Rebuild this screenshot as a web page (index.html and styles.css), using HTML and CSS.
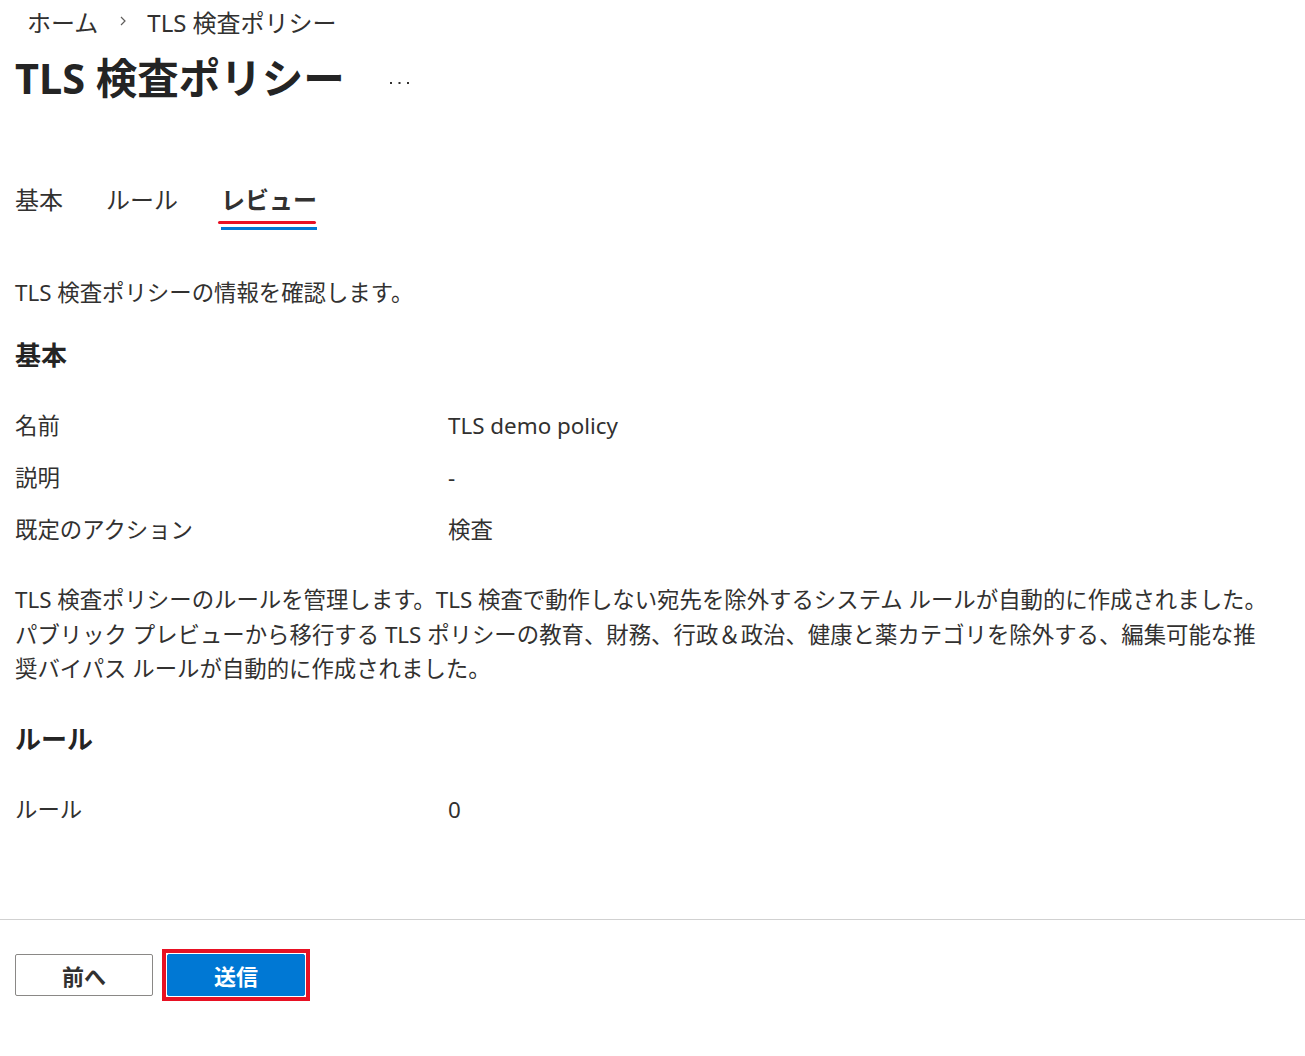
FILE: index.html
```html
<!DOCTYPE html>
<html lang="ja">
<head>
<meta charset="utf-8">
<title>TLS 検査ポリシー</title>
<link rel="stylesheet" href="styles.css">
</head>
<body>
<header class="top">
  <nav class="crumbs">
    <span class="crumb">ホーム</span>
    <svg class="chev" width="8" height="12" viewBox="0 0 8 12"><path d="M2 2 L6 6 L2 10" fill="none" stroke="#605e5c" stroke-width="1.2"/></svg>
    <span class="crumb">TLS 検査ポリシー</span>
  </nav>
  <div class="title-row">
    <h1 class="title">TLS 検査ポリシー</h1>
    <svg class="more" width="20" height="4" viewBox="0 0 20 4" aria-label="その他"><rect x="0" y="1" width="2" height="2" fill="#323130"/><rect x="8.5" y="1" width="2" height="2" fill="#323130"/><rect x="17" y="1" width="2" height="2" fill="#323130"/></svg>
  </div>
</header>

<div class="tabs">
  <div class="tab">基本</div>
  <div class="tab">ルール</div>
  <div class="tab active">レビュー<span class="mark"></span></div>
</div>

<main class="content">
  <p class="desc">TLS 検査ポリシーの情報を確認します。</p>
  <h2 class="section">基本</h2>
  <dl class="grid">
    <dt>名前</dt><dd>TLS demo policy</dd>
    <dt>説明</dt><dd>-</dd>
    <dt>既定のアクション</dt><dd>検査</dd>
  </dl>
  <p class="para">TLS 検査ポリシーのルールを管理します。TLS 検査で動作しない宛先を除外するシステム ルールが自動的に作成されました。パブリック プレビューから移行する TLS ポリシーの教育、財務、行政＆政治、健康と薬カテゴリを除外する、編集可能な推奨バイパス ルールが自動的に作成されました。</p>
  <h2 class="section section-2">ルール</h2>
  <dl class="grid">
    <dt>ルール</dt><dd>0</dd>
  </dl>
</main>

<footer class="footer">
  <button class="btn btn-secondary">前へ</button>
  <button class="btn btn-primary">送信</button>
</footer>
</body>
</html>
```

FILE: styles.css
```css
html, body {
  margin: 0;
  padding: 0;
  background: #ffffff;
}
body {
  font-family: "Noto Sans", "Noto Sans CJK JP", sans-serif;
  color: #323130;
}
.top {
  padding: 4px 0 0 15px;
}
.crumbs {
  display: flex;
  align-items: center;
  height: 34px;
  font-size: 24px;
  color: #323130;
  padding-left: 12px;
}
.chev {
  margin: 0 20px 0 21px;
}
.title-row {
  display: flex;
  align-items: center;
  margin-top: 14px;
}
.title {
  margin: 0;
  font-size: 41.5px;
  line-height: 52px;
  font-weight: 700;
  color: #242424;
}
.more {
  margin-left: 45px;
  margin-top: 10px;
}
.tabs {
  display: flex;
  gap: 43px;
  padding-left: 15px;
  margin-top: 81px;
}
.tab {
  position: relative;
  font-size: 24px;
  line-height: 30px;
  padding-bottom: 12px;
  border-bottom: 3px solid transparent;
  color: #323130;
}
.tab.active {
  font-weight: 700;
  border-bottom-color: #0078d4;
}
.mark {
  position: absolute;
  left: -3px;
  right: 1px;
  bottom: 3px;
  height: 3px;
  border-radius: 2px;
  background: #e81123;
}
.content {
  padding: 0 30px 0 15px;
}
.desc {
  margin: 48px 0 0;
  font-size: 22.4px;
  line-height: 30px;
}
.section {
  margin: 30px 0 0;
  font-size: 26px;
  line-height: 34px;
  font-weight: 700;
  color: #242424;
}
.section-2 {
  margin-top: 35px;
}
.grid {
  display: grid;
  grid-template-columns: 433px 1fr;
  row-gap: 22px;
  margin: 39px 0 0;
  font-size: 22.4px;
  line-height: 30px;
}
.grid dt, .grid dd {
  margin: 0;
}
.para {
  margin: 38px 0 0;
  font-size: 22.4px;
  line-height: 34.5px;
}
.footer {
  margin-top: 94px;
  border-top: 1px solid #d1d1d1;
  padding: 34px 15px 60px;
  display: flex;
  gap: 14px;
}
.btn {
  font-family: "Noto Sans", "Noto Sans CJK JP", sans-serif;
  font-size: 22px;
  font-weight: 700;
  height: 42px;
  width: 138px;
  border-radius: 2px;
  padding: 0;
  cursor: pointer;
}
.btn-secondary {
  background: #ffffff;
  border: 1px solid #8a8886;
  color: #323130;
}
.btn-primary {
  position: relative;
  background: #0078d4;
  border: 1px solid #0078d4;
  color: #ffffff;
}
.btn-primary::after {
  content: "";
  position: absolute;
  inset: -6px;
  border: 4px solid #e81123;
  pointer-events: none;
}
```
